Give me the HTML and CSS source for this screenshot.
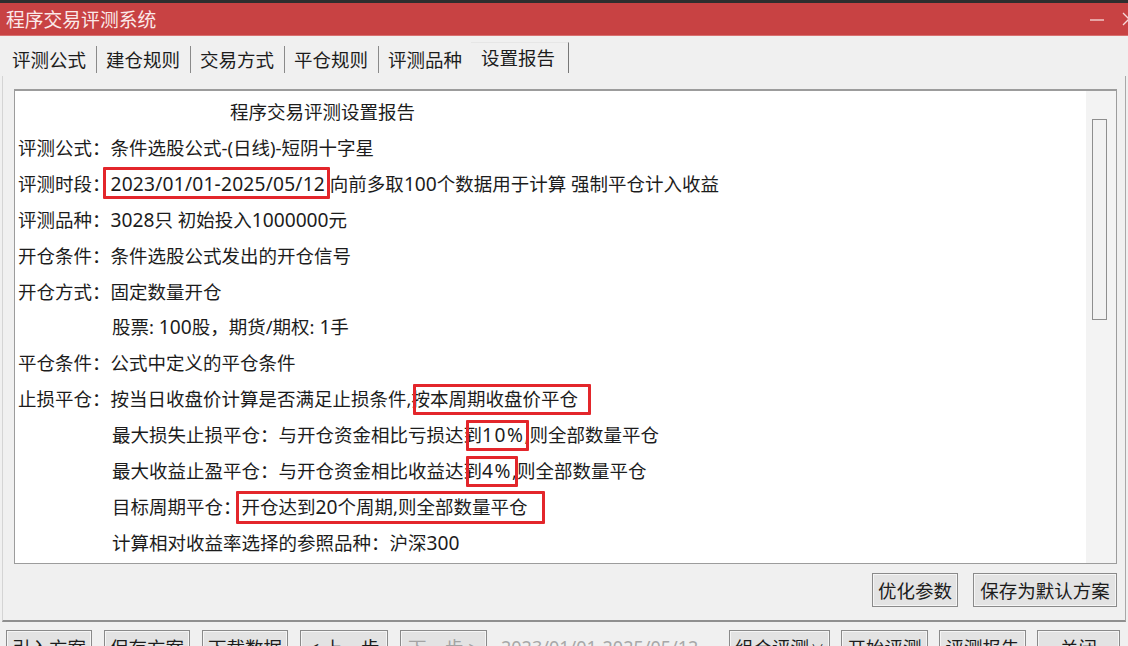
FILE: index.html
```html
<!DOCTYPE html>
<html lang="zh-CN">
<head>
<meta charset="utf-8">
<title>程序交易评测系统</title>
<link rel="stylesheet" href="styles.css">
</head>
<body>
<div class="strip"></div>
<div class="titlebar">
  <span class="title">程序交易评测系统</span>
  <div class="winctl">
    <svg class="ico-min" width="16" height="10" viewBox="0 0 16 10"><line x1="1" y1="5" x2="15" y2="5" stroke="#f6dada" stroke-width="1.3"/></svg>
    <svg class="ico-close" width="16" height="16" viewBox="0 0 16 16"><path d="M2 2 L14 14 M14 2 L2 14" stroke="#f6dada" stroke-width="1.3" fill="none"/></svg>
  </div>
</div>
<div class="tabs">
  <div class="tab">评测公式</div>
  <div class="tab">建仓规则</div>
  <div class="tab">交易方式</div>
  <div class="tab">平仓规则</div>
  <div class="tab pre">评测品种</div>
  <div class="tab active">设置报告</div>
</div>
<div class="page">
  <div class="report">
    <div class="lines">
      <div class="line heading">程序交易评测设置报告</div>
      <div class="line">评测公式：条件选股公式-(日线)-短阴十字星</div>
      <div class="line">评测时段：<span class="n date">2023/01/01-2025/05/12</span> 向前多取<span class="n">100</span>个数据用于计算 强制平仓计入收益</div>
      <div class="line">评测品种：<span class="n">3028</span>只 初始投入<span class="n">1000000</span>元</div>
      <div class="line">开仓条件：条件选股公式发出的开仓信号</div>
      <div class="line">开仓方式：固定数量开仓</div>
      <div class="line indent">股票: <span class="n">100</span>股，期货/期权: <span class="n">1</span>手</div>
      <div class="line">平仓条件：公式中定义的平仓条件</div>
      <div class="line">止损平仓：按当日收盘价计算是否满足止损条件,按本周期收盘价平仓</div>
      <div class="line indent">最大损失止损平仓：与开仓资金相比亏损达到<span class="n pct">10%</span>,则全部数量平仓</div>
      <div class="line indent">最大收益止盈平仓：与开仓资金相比收益达到<span class="n pct">4%</span>,则全部数量平仓</div>
      <div class="line indent">目标周期平仓：开仓达到<span class="n">20</span>个周期,则全部数量平仓</div>
      <div class="line indent">计算相对收益率选择的参照品种：沪深<span class="n">300</span></div>
    </div>
    <div class="scrollbar"><div class="thumb"></div></div>
    <div class="mark m1"></div>
    <div class="mark m2"></div>
    <div class="mark m3"></div>
    <div class="mark m4"></div>
    <div class="mark m5"></div>
  </div>
  <div class="actions">
    <button class="btn w86">优化参数</button>
    <button class="btn w144">保存为默认方案</button>
  </div>
</div>
<div class="bottombar">
  <div class="group">
    <button class="btn w86">引入方案</button>
    <button class="btn w86">保存方案</button>
    <button class="btn w86">下载数据</button>
    <button class="btn w88">&lt; 上一步</button>
    <button class="btn w87 disabled">下一步 &gt;</button>
    <span class="status">2023/01/01-2025/05/12</span>
  </div>
  <div class="group right">
    <button class="btn w101">组合评测<span class="caret">∨</span></button>
    <button class="btn w87">开始评测</button>
    <button class="btn w87">评测报告</button>
    <button class="btn w83">关闭</button>
  </div>
</div>
</body>
</html>
```

FILE: styles.css
```css
* { box-sizing: border-box; }
html, body { margin: 0; padding: 0; }
body {
  width: 1128px;
  height: 646px;
  overflow: hidden;
  background: #f0f0f0;
  font-family: "Noto Sans", "Noto Sans CJK SC", sans-serif;
  color: #1c1c1c;
}
.strip { height: 3px; background: #2e2e2e; }
.titlebar {
  height: 33px;
  background: #c84243;
  border-bottom: 1px solid #d8706f;
  display: flex;
  align-items: center;
  justify-content: space-between;
  padding-left: 6px;
}
.title { font-size: 18.8px; color: #fbe9e9; }
.winctl { display: flex; align-items: center; gap: 16px; margin-right: -9px; }
.ico-min { margin-top: 2px; }

.tabs {
  height: 40px;
  display: flex;
  align-items: flex-end;
  padding-left: 3px;
  font-size: 18.5px;
}
.tab {
  height: 27px;
  line-height: 27px;
  margin-bottom: 3px;
  padding: 0 10px 0 9px;
  border-right: 1px solid #8a8a8a;
  color: #1c1c1c;
}
.tab.pre { border-right-color: transparent; padding-right: 8px; }
.tab.active {
  height: 31px;
  line-height: 29px;
  margin-bottom: 3px;
  padding: 0 13px 0 10px;
  border-right: 1px solid #777;
  border-top: 1px solid #e6e6e6;
}

.page {
  margin-left: 2px;
  width: 1124px;
  height: 546px;
  border-left: 1px solid #d4d4d4;
  border-right: 1px solid #a8a8a8;
  border-bottom: 2px solid #8f8f8f;
  padding: 13px 0 0 11px;
}
.report {
  position: relative;
  width: 1103px;
  height: 475px;
  background: #fff;
  border: 1px solid #9c9c9c;
  border-top-width: 2px;
  display: flex;
}
.lines {
  flex: 1;
  padding: 3px 0 0 3px;
  font-size: 18.5px;
  line-height: 35.9px;
  white-space: nowrap;
  color: #1c1c1c;
}
.n { font-size: 19.2px; }
.n.date { letter-spacing: 0.2px; }
.n.pct { letter-spacing: 1.5px; }
.line.heading { padding-left: 212px; }
.line.indent { padding-left: 94px; }
.scrollbar {
  width: 30px;
  background: #f3f3f3;
  padding: 28px 0 0 6px;
}
.thumb {
  width: 15px;
  height: 201px;
  border: 1px solid #8e8e8e;
  background: #f2f2f2;
}
.mark {
  position: absolute;
  border: 3px solid #e3262b;
  border-radius: 1px;
}
.m1 { left: 88px; top: 76px; width: 227px; height: 32px; }
.m2 { left: 398px; top: 293px; width: 178px; height: 31px; }
.m3 { left: 451px; top: 329px; width: 63px; height: 31px; }
.m4 { left: 451px; top: 365px; width: 52px; height: 31px; }
.m5 { left: 221px; top: 400px; width: 309px; height: 33px; }

.actions {
  display: flex;
  justify-content: flex-end;
  gap: 15px;
  margin-top: 9px;
  padding-right: 8px;
}
.btn {
  height: 34px;
  padding: 0;
  background: #e3e3e3;
  border: 1px solid #8a8a8a;
  box-shadow: inset 0 0 0 1px #f5f5f5;
  font-family: "Noto Sans", "Noto Sans CJK SC", sans-serif;
  font-size: 18.5px;
  color: #1c1c1c;
  display: inline-flex;
  align-items: center;
  justify-content: center;
  white-space: nowrap;
}
.btn.disabled { color: #a3a3a3; }
.w83 { width: 83px; }
.w86 { width: 86px; }
.w87 { width: 87px; }
.w88 { width: 88px; }
.w101 { width: 101px; }
.w144 { width: 144px; }
.caret { font-size: 13px; margin-left: 2px; }

.bottombar {
  display: flex;
  justify-content: space-between;
  padding: 8px 8px 0 6px;
}
.group { display: flex; gap: 12px; align-items: flex-start; }
.group.right { gap: 11px; }
.status {
  font-size: 18px;
  color: #a8a8a8;
  line-height: 34px;
  margin-left: 2px;
}
```
